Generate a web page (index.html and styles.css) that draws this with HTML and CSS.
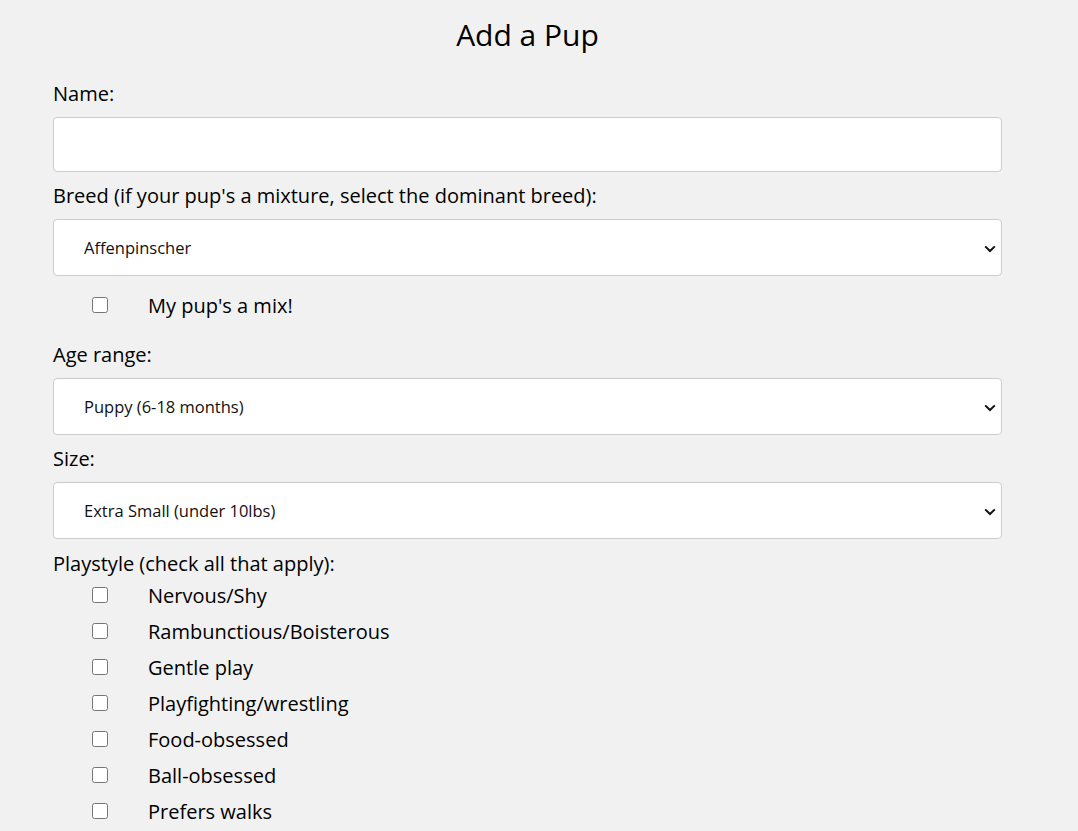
FILE: index.html
```html
<!DOCTYPE html>
<html lang="en">
<head>
<meta charset="utf-8">
<title>Add a Pup</title>
<link rel="stylesheet" href="styles.css">
</head>
<body>
<main class="page">
  <h1 class="title">Add a Pup</h1>
  <form class="form">
    <label class="field-label" for="name">Name:</label>
    <input class="text-input" id="name" type="text">

    <label class="field-label" for="breed">Breed (if your pup's a mixture, select the dominant breed):</label>
    <div class="select-wrap">
      <select class="select" id="breed">
        <option>Affenpinscher</option>
      </select>
      <svg class="chevron" viewBox="0 0 12 8" width="12" height="8" aria-hidden="true"><path d="M1.2 1.4 L6 6 L10.8 1.4" fill="none" stroke="#111" stroke-width="2"/></svg>
    </div>
    <label class="check-row check-row--mix"><input type="checkbox" class="check"><span>My pup's a mix!</span></label>

    <label class="field-label" for="age">Age range:</label>
    <div class="select-wrap">
      <select class="select" id="age">
        <option>Puppy (6-18 months)</option>
      </select>
      <svg class="chevron" viewBox="0 0 12 8" width="12" height="8" aria-hidden="true"><path d="M1.2 1.4 L6 6 L10.8 1.4" fill="none" stroke="#111" stroke-width="2"/></svg>
    </div>

    <label class="field-label" for="size">Size:</label>
    <div class="select-wrap">
      <select class="select" id="size">
        <option>Extra Small (under 10lbs)</option>
      </select>
      <svg class="chevron" viewBox="0 0 12 8" width="12" height="8" aria-hidden="true"><path d="M1.2 1.4 L6 6 L10.8 1.4" fill="none" stroke="#111" stroke-width="2"/></svg>
    </div>

    <span class="field-label field-label--group">Playstyle (check all that apply):</span>
    <div class="check-list">
      <label class="check-row"><input type="checkbox" class="check"><span>Nervous/Shy</span></label>
      <label class="check-row"><input type="checkbox" class="check"><span>Rambunctious/Boisterous</span></label>
      <label class="check-row"><input type="checkbox" class="check"><span>Gentle play</span></label>
      <label class="check-row"><input type="checkbox" class="check"><span>Playfighting/wrestling</span></label>
      <label class="check-row"><input type="checkbox" class="check"><span>Food-obsessed</span></label>
      <label class="check-row"><input type="checkbox" class="check"><span>Ball-obsessed</span></label>
      <label class="check-row"><input type="checkbox" class="check"><span>Prefers walks</span></label>
    </div>
  </form>
</main>
</body>
</html>
```

FILE: styles.css
```css
html, body {
  margin: 0;
  padding: 0;
  background: #f1f1f1;
}

body {
  font-family: "Open Sans", "Noto Sans", sans-serif;
  color: #000;
}

.page {
  width: 949px;
  margin-left: 53px;
  padding-top: 15px;
}

.title {
  margin: 0;
  font-size: 30px;
  font-weight: 400;
  line-height: 40px;
  text-align: center;
  color: #000;
}

.form {
  display: flex;
  flex-direction: column;
  padding-top: 25px;
}

.field-label {
  display: block;
  font-size: 20px;
  line-height: 27px;
  margin: 0 0 10px;
}

.field-label--group {
  margin: 1px 0 0;
}

.text-input {
  box-sizing: border-box;
  height: 55px;
  width: 100%;
  margin: 0 0 10px;
  border: 1px solid #cccccc;
  border-radius: 4px;
  background: #fff;
  font-family: inherit;
  font-size: 16px;
}

.select-wrap {
  position: relative;
  margin: 0 0 10px;
}

.select {
  display: block;
  box-sizing: border-box;
  height: 57px;
  width: 100%;
  margin: 0;
  padding: 0 30px 0 30px;
  border: 1px solid #cccccc;
  border-radius: 4px;
  background-color: #fff;
  font-family: inherit;
  font-size: 16.5px;
  color: #111;
  -webkit-appearance: none;
  appearance: none;
}

.chevron {
  position: absolute;
  right: 6px;
  top: 50%;
  margin-top: -3px;
  pointer-events: none;
}

.check-list {
  display: flex;
  flex-direction: column;
}

.check-row {
  display: flex;
  align-items: center;
  height: 36px;
  padding-left: 39px;
  font-size: 20px;
}

.check-row--mix {
  margin: 1px 0 18px;
}

.check {
  width: 16px;
  height: 16px;
  margin: 0 40px 0 0;
  flex: none;
}
```
